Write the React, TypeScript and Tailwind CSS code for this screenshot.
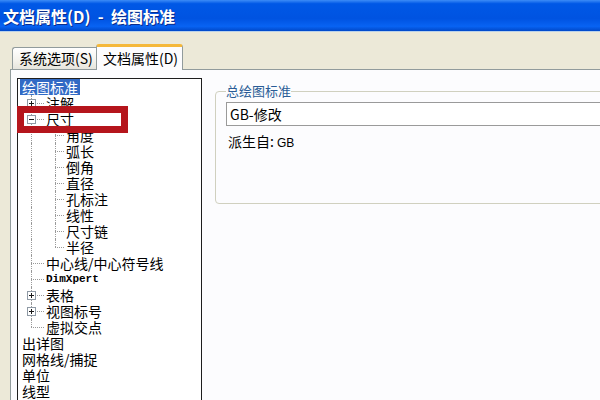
import React from "react"

type Guide = "none" | "pipe" | "tee" | "corner"

interface TreeRowProps {
  guides?: Guide[]
  box?: "+" | "-"
  label: string
  selected?: boolean
  mono?: boolean
}

const cjk = "font-['Noto_Sans_CJK_SC','Noto_Sans',sans-serif]"

const ExpandBox = ({ sign }: { sign: "+" | "-" }) => (
  <div className="absolute top-[4px] left-[9px] w-[9px] h-[9px] border border-[#8f9aa5] bg-white">
    <svg width="7" height="7" viewBox="0 0 7 7" className="block">
      <line x1="1" y1="3.5" x2="6" y2="3.5" stroke="#1a1a1a" strokeWidth="1" />
      {sign === "+" && <line x1="3.5" y1="1" x2="3.5" y2="6" stroke="#1a1a1a" strokeWidth="1" />}
    </svg>
  </div>
)

const TreeRow: React.FC<TreeRowProps> = ({ guides = [], box, label, selected, mono }) => {
  return (
    <div className={`flex h-4 items-center ${guides.length === 0 ? "pl-[2px]" : ""}`}>
      {guides.map((g, i) => {
        const isLast = i === guides.length - 1
        return (
          <div key={i} className={`relative h-4 shrink-0 ${i === 0 ? "w-[26px]" : "w-[20px]"}`}>
            {g !== "none" && (
              <div
                className={`absolute top-0 border-l border-dotted border-[#9a9a9a] ${
                  i === 0 ? "left-[13px]" : "left-[11px]"
                } ${g === "corner" ? "h-2" : "h-4"}`}
              />
            )}
            {(g === "tee" || g === "corner") && (
              <div
                className={`absolute top-2 right-0 border-t border-dotted border-[#9a9a9a] ${
                  i === 0 ? "left-[13px]" : "left-[11px]"
                }`}
              />
            )}
            {isLast && box && <ExpandBox sign={box} />}
          </div>
        )
      })}
      <span
        className={`px-[2px] whitespace-nowrap leading-4 ${
          mono ? "font-['Liberation_Mono',monospace] text-[11px] font-bold" : `${cjk} text-[14px]`
        } ${selected ? "bg-[#316ac5] text-white" : "text-black"}`}
      >
        {label}
      </span>
    </div>
  )
}

const rows: TreeRowProps[] = [
  { label: "绘图标准", selected: true },
  { guides: ["tee"], box: "+", label: "注解" },
  { guides: ["tee"], box: "-", label: "尺寸" },
  { guides: ["pipe", "tee"], label: "角度" },
  { guides: ["pipe", "tee"], label: "弧长" },
  { guides: ["pipe", "tee"], label: "倒角" },
  { guides: ["pipe", "tee"], label: "直径" },
  { guides: ["pipe", "tee"], label: "孔标注" },
  { guides: ["pipe", "tee"], label: "线性" },
  { guides: ["pipe", "tee"], label: "尺寸链" },
  { guides: ["pipe", "corner"], label: "半径" },
  { guides: ["tee"], label: "中心线/中心符号线" },
  { guides: ["tee"], label: "DimXpert", mono: true },
  { guides: ["tee"], box: "+", label: "表格" },
  { guides: ["tee"], box: "+", label: "视图标号" },
  { guides: ["corner"], label: "虚拟交点" },
  { label: "出详图" },
  { label: "网格线/捕捉" },
  { label: "单位" },
  { label: "线型" },
]

export default function App() {
  return (
    <div className="relative w-[600px] h-[400px] overflow-hidden bg-[#ece9d8] flex flex-col">
      {/* title bar */}
      <div className="h-[32px] shrink-0 flex items-center pl-[3px] bg-[linear-gradient(#3d8cf7,#0058e6_12%,#0053e1_60%,#0863f3_85%,#0048c8)] border-b border-[#b9d1ea]">
        <span className={`${cjk} text-white font-bold text-[16px] whitespace-pre [text-shadow:1px_1px_#0b2c8c]`}>
          文档属性(D)  -  绘图标准
        </span>
      </div>

      {/* tabs */}
      <div className="h-[37px] shrink-0 flex items-end pl-[12px] relative z-10">
        <div className={`h-[22px] w-[84px] flex items-center pl-[6px] border-t border-l border-[#919b9c] rounded-tl-[3px] bg-[linear-gradient(#ffffff,#f3f2ec_60%,#e6e5dd)] ${cjk} text-[14px] text-black`}>
          系统选项(S)
        </div>
        <div className={`h-[26px] w-[87px] -mb-px flex items-center pl-[6px] border-x border-[#919b9c] border-t-[3px] border-t-[#f5b83a] rounded-t-[3px] bg-[#fcfcfe] ${cjk} text-[14px] text-black`}>
          文档属性(D)
        </div>
      </div>

      {/* panel */}
      <div className="flex-1 ml-[10px] border-l border-t border-[#919b9c] bg-[#fcfcfe] flex">
        <div className="mt-[8px] ml-[6px] w-[185px] h-[340px] shrink-0 border border-[#1e1e1e] bg-white overflow-hidden">
          {rows.map((r, i) => (
            <TreeRow key={i} {...r} />
          ))}
        </div>

        <fieldset className="ml-[13px] mt-[13px] -mr-[20px] flex-1 h-[121px] border border-[#d0d0bf] rounded-[4px] pl-[10px] pr-[10px]">
          <legend className={`${cjk} text-[13px] leading-4 text-[#2a5c96]`}>总绘图标准</legend>
          <div className={`mt-[3px] h-[24px] border border-[#9a9a9a] bg-white flex items-center pl-[3px] ${cjk} text-[14px] text-black`}>
            GB-修改
          </div>
          <div className={`mt-[7px] pl-[2px] leading-4 ${cjk} text-[14px] text-black`}>
            派生自: <span className="font-['Liberation_Sans',sans-serif] text-[12px]">GB</span>
          </div>
        </fieldset>
      </div>

      {/* red highlight */}
      <div className="absolute left-[17px] top-[106px] w-[111px] h-[27px] border-[7px] border-[#b5151c] pointer-events-none" />
    </div>
  )
}
